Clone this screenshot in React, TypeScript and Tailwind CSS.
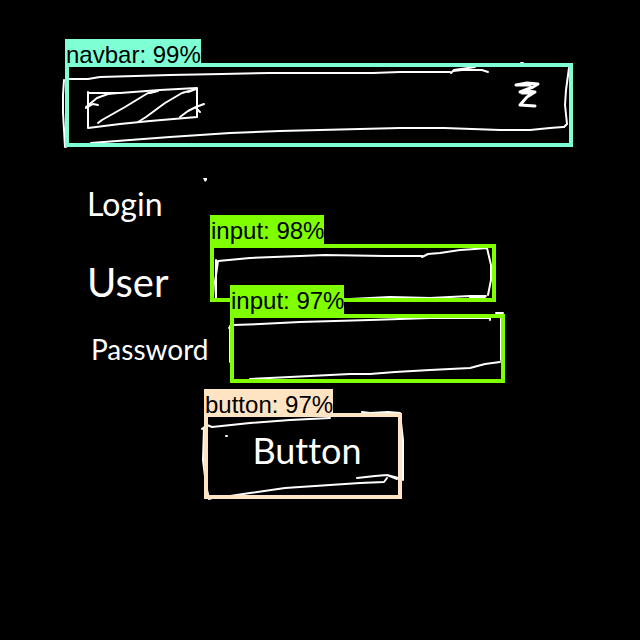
import type { ReactNode } from "react";

const hand = "font-['Lato',cursive] text-white [font-variant-ligatures:none]";

function Tag({ className, children }: { className: string; children: ReactNode }) {
  return (
    <span
      className={`absolute bottom-full left-0 whitespace-nowrap pl-px font-['Liberation_Sans',Arial,sans-serif] text-[24px] leading-[31px] text-black ${className}`}
    >
      {children}
    </span>
  );
}

function Strokes({ viewBox, paths, width = 2 }: { viewBox: string; paths: string[]; width?: number }) {
  return (
    <svg
      aria-hidden="true"
      viewBox={viewBox}
      preserveAspectRatio="none"
      className="pointer-events-none absolute inset-0 h-full w-full overflow-visible"
      fill="none"
      stroke="white"
      strokeWidth={width}
      strokeLinecap="round"
      strokeLinejoin="round"
    >
      {paths.map((d) => (
        <path key={d} d={d} vectorEffect="non-scaling-stroke" />
      ))}
    </svg>
  );
}

const navPaths = [
  "M66 79L88 79L100 77L170 75L222 74L270 73L373 73L400 72L450 72",
  "M451 73L454 70L475 67M453 71L462 70L482 70L488 72",
  "M64 80L63 95L63 112L65 147L70 145",
  "M91 143L130 140L170 137L200 135L230 133L280 131L360 129L400 128L444 128L500 130L530 130L550 128L563 127",
  "M569 68L566 90L565 105L567 124L564 127",
  "M521 63L523 63",
];

const logoPaths = [
  "M88 92L88 128L120 124L150 121L197 117L197 88L160 90L120 93L88 93",
  "M86 107L97 98L108 94L118 93M86 108L93 104L98 105",
  "M98 123L102 120L125 107L148 93L158 91L150 93",
  "M138 122L146 117L165 103L182 93L196 89L188 92",
  "M180 117L188 111L196 107L204 104M196 108L200 112",
];

const menuPaths = [
  "M516 85L527 83L538 84L533 87L520 92L528 91L535 92L527 97L520 105L535 106M517 85L530 85M522 93L532 93",
];

const userPaths = [
  "M216 298L215 282L218 261L250 258L300 256L325 255L385 256L422 256",
  "M216 260L216 297M422 257L428 254L440 253L460 250L475 249L487 248L491 265L491 280L488 295",
  "M216 299L350 299L390 297L430 298L470 296L486 296M470 298L485 298",
];

const passwordPaths = [
  "M229 328L233 325L260 324L300 322L335 321L370 320L430 318L490 318L490 320",
  "M230 326L230 362",
  "M250 379L290 377L330 375L350 374L370 374L395 372L430 370L470 368L485 364L500 362",
  "M501 318L501 360M496 313L503 313",
];

const buttonPaths = [
  "M202 429L207 425L212 427L250 423L290 420L330 418",
  "M362 412L370 413L388 412L400 413L403 440L403 480",
  "M204 428L203 460L206 485L209 499L215 497",
  "M230 496L250 493L285 488L330 485L360 483L384 482L387 478",
  "M357 478L375 476L387 475L397 479M387 475L402 479",
  "M226 436L227 436",
];

export default function App() {
  return (
    <main className="min-h-screen w-full bg-black pt-[63px] pr-[67px] pb-16 pl-[65px]">
      <nav aria-label="Main" className="relative h-[84px]">
        <Strokes viewBox="65 63 508 84" paths={navPaths} />
        <div className="relative flex h-full items-start justify-between border-4 border-[#7fffd4] pt-4 pr-[29px] pl-[19px]">
          <a href="#home" aria-label="Home" className="relative mt-1 block h-10 w-[109px]">
            <Strokes viewBox="88 87 109 40" paths={logoPaths} />
          </a>
          <button type="button" aria-label="Menu" className="relative h-6 w-6">
            <Strokes viewBox="516 83 24 24" paths={menuPaths} width={3} />
          </button>
        </div>
        <Tag className="h-6 bg-[#7fffd4]">navbar: 99%</Tag>
      </nav>

      <form className="pl-[22px]" onSubmit={(e) => e.preventDefault()}>
        <div className="mt-[39px] flex h-9">
          <h1 className={`${hand} w-[116px] text-[32px] leading-9`}>Login</h1>
          <svg aria-hidden="true" className="-mt-2 h-1 w-1" viewBox="0 0 4 4" fill="white">
            <path d="M0 0H4V2L2 4Z" />
          </svg>
        </div>

        <div className="mt-[22px] flex h-[58px] items-end pr-[77px]">
          <label htmlFor="user" className={`${hand} w-[123px] shrink-0 text-[40px] leading-10`}>
            User
          </label>
          <div className="relative h-full min-w-0 flex-1">
            <Strokes viewBox="210 244 286 58" paths={userPaths} />
            <input
              id="user"
              type="text"
              className="relative block h-full w-full border-4 border-[#7fff00] bg-transparent px-3 text-white outline-none"
            />
            <Tag className="h-[29px] bg-[#7fff00]">input: 98%</Tag>
          </div>
        </div>

        <div className="mt-3 flex h-[69px] items-center pr-[68px]">
          <label htmlFor="password" className={`${hand} w-[143px] shrink-0 pl-1 text-[28px] leading-9`}>
            Password
          </label>
          <div className="relative h-full min-w-0 flex-1">
            <Strokes viewBox="230 314 275 69" paths={passwordPaths} />
            <input
              id="password"
              type="password"
              className="relative block h-full w-full border-4 border-[#7fff00] bg-transparent px-3 text-white outline-none"
            />
            <Tag className="h-[29px] bg-[#7fff00]">input: 97%</Tag>
          </div>
        </div>

        <div className="relative mt-[30px] ml-[117px] h-[86px] w-[198px]">
          <Strokes viewBox="204 413 198 86" paths={buttonPaths} />
          <button
            type="submit"
            className={`${hand} relative h-full w-full border-4 border-[#ffe4c4] pb-3 pl-2 text-[36px] leading-10`}
          >
            Button
          </button>
          <Tag className="h-6 bg-[#ffe4c4]">button: 97%</Tag>
        </div>
      </form>
    </main>
  );
}
